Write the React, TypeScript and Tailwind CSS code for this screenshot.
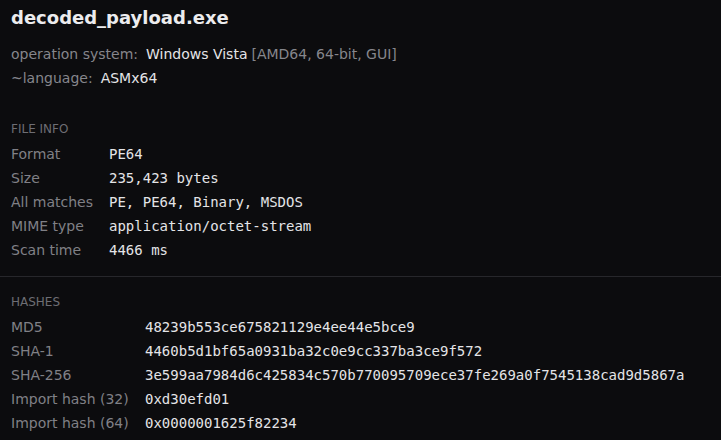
import React from 'react';

const fileInfo = [
    ['Format', 'PE64'],
    ['Size', '235,423 bytes'],
    ['All matches', 'PE, PE64, Binary, MSDOS'],
    ['MIME type', 'application/octet-stream'],
    ['Scan time', '4466 ms'],
];

const hashes = [
    ['MD5', '48239b553ce675821129e4ee44e5bce9'],
    ['SHA-1', '4460b5d1bf65a0931ba32c0e9cc337ba3ce9f572'],
    ['SHA-256', '3e599aa7984d6c425834c570b770095709ece37fe269a0f7545138cad9d5867a'],
    ['Import hash (32)', '0xd30efd01'],
    ['Import hash (64)', '0x0000001625f82234'],
];

const sans = "font-['DejaVu_Sans',sans-serif]";
const mono = "font-['DejaVu_Sans_Mono',monospace]";

export default function App() {
    return (
        <div className={`min-h-screen w-full bg-[#0c0c0e] text-[#e4e4e7] ${sans}`}>
            <div className="px-[11px] pt-[6px] pb-[14px]">
                <h1 className="text-[18px] font-bold leading-[24px] text-[#ececee]">decoded_payload.exe</h1>

                {/* Platform */}
                <div className="mt-[12px] text-[14px]">
                    <div className="flex h-[24px] items-center">
                        <span className="text-[#86868c]">operation system:</span>
                        <span className="ml-[8px] text-[#e4e4e7]">Windows Vista</span>
                        <span className="ml-[4px] text-[#86868c]">[AMD64, 64-bit, GUI]</span>
                    </div>
                    <div className="flex h-[24px] items-center">
                        <span className="text-[#86868c]">~language:</span>
                        <span className="ml-[8px] text-[#e4e4e7]">ASMx64</span>
                    </div>
                </div>

                {/* File info */}
                <div className="mt-[31px] text-[12px] leading-[16px] uppercase text-[#6e6e74]">File info</div>
                <div className="mt-[5px] text-[14px]">
                    {fileInfo.map(([k, v]) => (
                        <div key={k} className="flex h-[24px] items-center">
                            <span className="w-[98px] shrink-0 text-[#808086]">{k}</span>
                            <span className={`${mono} text-[#e4e4e7]`}>{v}</span>
                        </div>
                    ))}
                </div>
            </div>

            <div className="border-t border-[#27272b] px-[11px] pt-[17px]">
                <div className="text-[12px] leading-[16px] uppercase text-[#6e6e74]">Hashes</div>
                <div className="mt-[5px] text-[14px]">
                    {hashes.map(([k, v]) => (
                        <div key={k} className="flex h-[24px] items-center">
                            <span className="w-[134px] shrink-0 text-[#808086]">{k}</span>
                            <span className={`${mono} text-[#e4e4e7]`}>{v}</span>
                        </div>
                    ))}
                </div>
            </div>
        </div>
    );
}
